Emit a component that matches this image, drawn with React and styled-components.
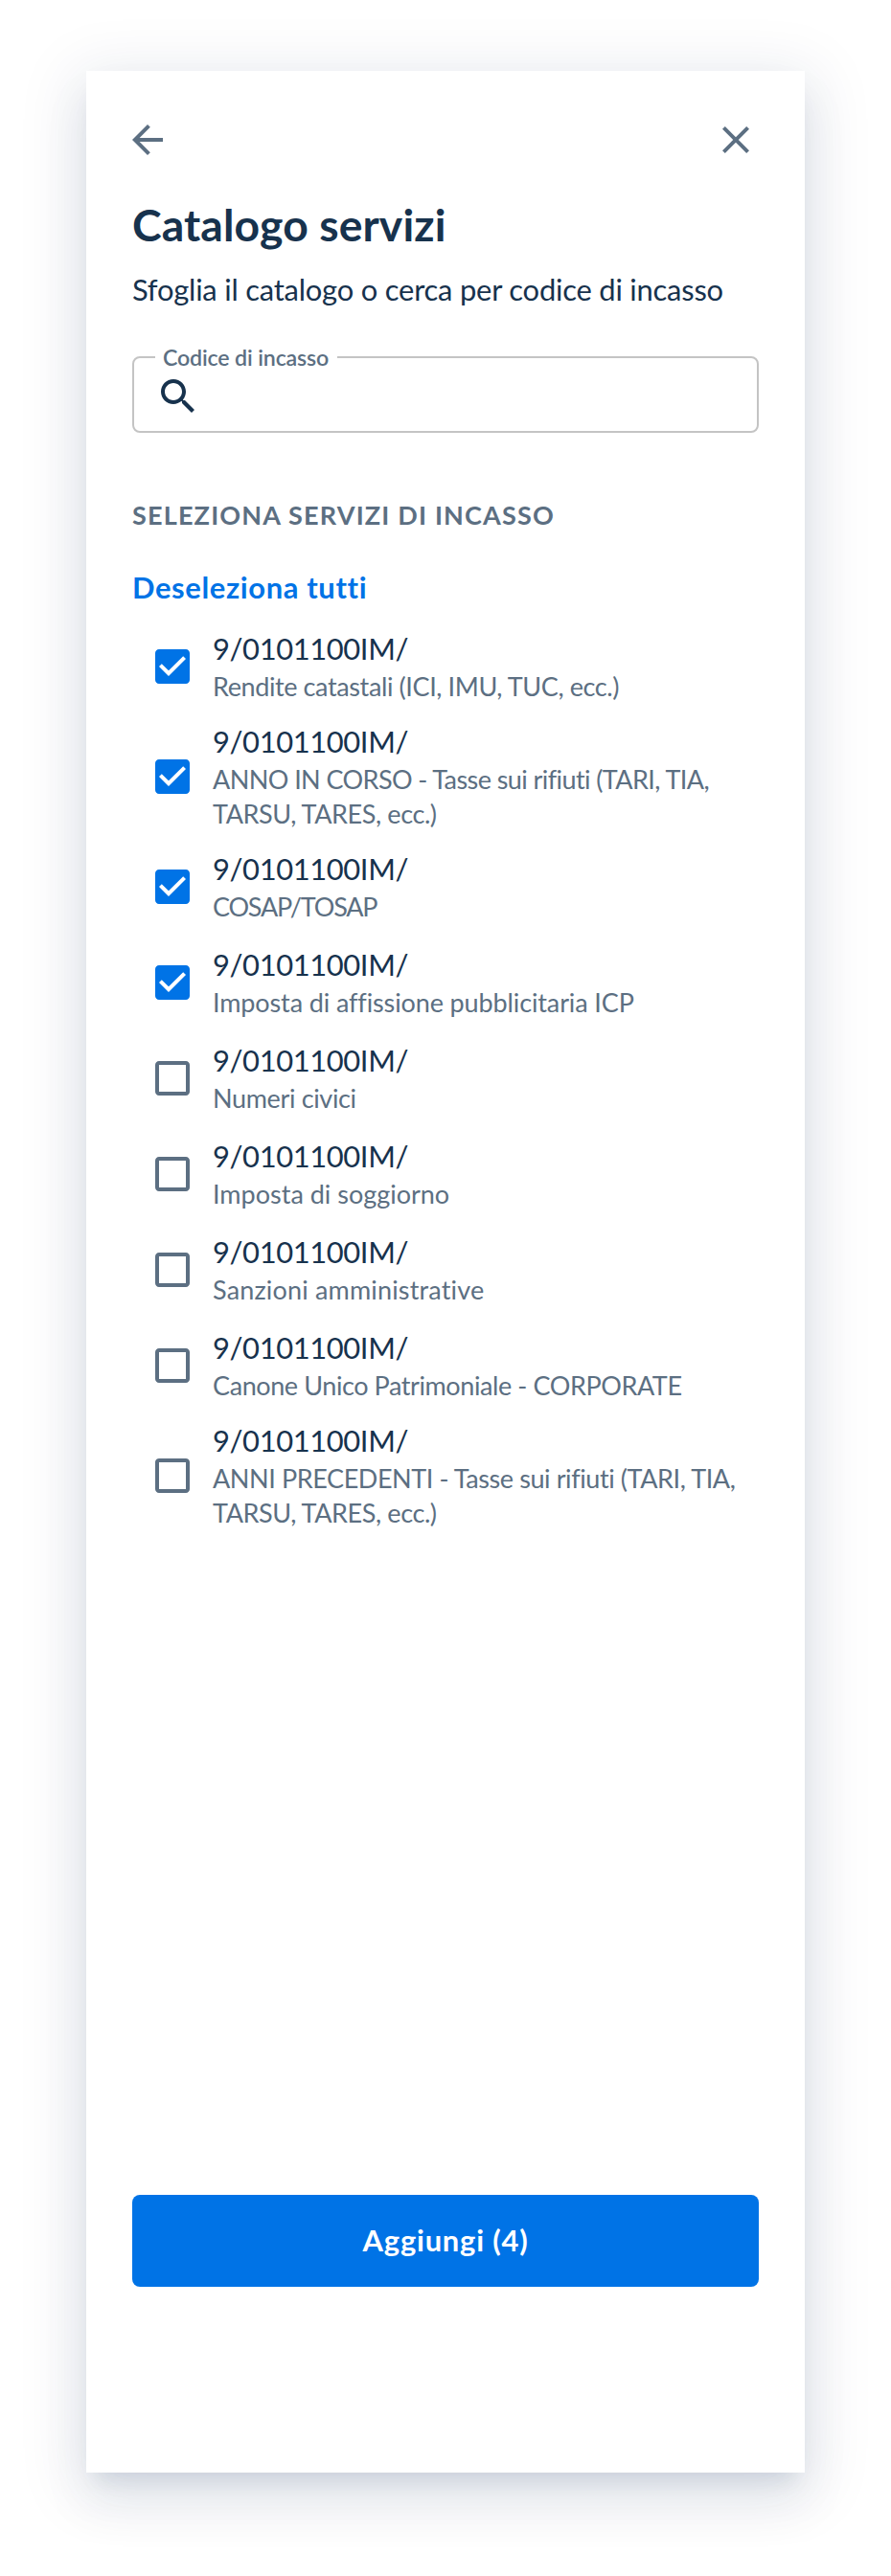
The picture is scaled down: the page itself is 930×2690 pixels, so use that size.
import React, { useState } from 'react';
import styled, { createGlobalStyle } from 'styled-components';

const color = {
  text: '#17324D',
  muted: '#5C6F82',
  primary: '#0073E6',
  outline: '#C4C4C4',
};

const GlobalStyle = createGlobalStyle`
  *, *::before, *::after { box-sizing: border-box; }
  body {
    margin: 0;
    background: #fff;
    font-family: Lato, "Open Sans", sans-serif;
    color: ${color.text};
  }
`;

const Page = styled.main`
  width: 930px;
  height: 2690px;
  padding: 74px 90px 108px;
  display: flex;
  overflow: hidden;
`;

const Drawer = styled.section`
  flex: 1;
  display: flex;
  flex-direction: column;
  padding: 48px 48px 194px;
  background: #fff;
  box-shadow:
    0 16px 20px -10px rgba(0, 43, 85, 0.1),
    0 32px 48px 4px rgba(0, 43, 85, 0.05),
    0 12px 60px 10px rgba(0, 43, 85, 0.1);
`;

const TopBar = styled.div`
  display: flex;
  justify-content: space-between;
  margin-left: -8px;
`;

const IconButton = styled.button`
  display: flex;
  padding: 0;
  border: 0;
  background: none;
  color: ${color.muted};
`;

const Svg = styled.svg`
  display: block;
  width: 48px;
  height: 48px;
  flex: none;
  fill: currentColor;
`;

const Title = styled.h1`
  margin: 36px 0 0;
  font-size: 46.3px;
  line-height: 56px;
  font-weight: 700;
  letter-spacing: 0.1px;
`;

const Subtitle = styled.p`
  margin: 17px 0 0;
  font-size: 30.9px;
  line-height: 48px;
  letter-spacing: -0.2px;
  white-space: nowrap;
`;

const Field = styled.label`
  position: relative;
  display: flex;
  height: 80px;
  margin-top: 45px;
  padding: 16px 22px;
  border: 2px solid ${color.outline};
  border-radius: 8px;
`;

const FieldLabel = styled.span`
  position: absolute;
  top: -13px;
  left: 22px;
  width: 190px;
  padding-left: 8px;
  background: #fff;
  color: ${color.muted};
  font-size: 23.2px;
  line-height: 24px;
  font-weight: 600;
  letter-spacing: -0.16px;
  white-space: nowrap;
`;

const Input = styled.input`
  flex: 1;
  min-width: 0;
  padding: 0 0 0 12px;
  border: 0;
  outline: 0;
  background: none;
  color: inherit;
  font: inherit;
  font-size: 31px;
`;

const SectionTitle = styled.h2`
  margin: 68px 0 0;
  color: ${color.muted};
  font-size: 27px;
  line-height: 36px;
  font-weight: 700;
  letter-spacing: 1.18px;
  text-transform: uppercase;
`;

const ToggleAll = styled.button`
  align-self: flex-start;
  margin: 34px 0 0;
  padding: 0;
  border: 0;
  background: none;
  color: ${color.primary};
  font-family: inherit;
  font-size: 30.9px;
  line-height: 48px;
  font-weight: 700;
  letter-spacing: 0.65px;
`;

const List = styled.ul`
  margin: 8px 0 0;
  padding: 0;
  list-style: none;
`;

const Item = styled.li`
  display: flex;
  align-items: center;
  gap: 18px;
  min-height: 100px;
  padding: 5px 0 5px 18px;
  color: ${(p) => (p.$checked ? color.primary : color.muted)};
`;

const ItemText = styled.div`
  padding-bottom: 3px;
  white-space: pre;
`;

const Code = styled.div`
  color: ${color.text};
  font-size: 30.9px;
  line-height: 48px;
  letter-spacing: -0.38px;
`;

const Description = styled.div`
  margin-top: -3px;
  color: ${color.muted};
  font-size: 27px;
  line-height: 36px;
`;

const DescriptionLine = styled.div`
  letter-spacing: ${(p) => p.$tracking}px;
`;

const Submit = styled.button`
  height: 96px;
  margin-top: auto;
  padding: 0;
  border: 0;
  border-radius: 8px;
  background: ${color.primary};
  color: #fff;
  font-family: inherit;
  font-size: 30.9px;
  line-height: 48px;
  font-weight: 700;
  letter-spacing: 0.8px;
`;

const paths = {
  back: 'M20 11H7.83l5.59-5.59L12 4l-8 8 8 8 1.41-1.41L7.83 13H20v-2z',
  close:
    'M19 6.41 17.59 5 12 10.59 6.41 5 5 6.41 10.59 12 5 17.59 6.41 19 12 13.41 17.59 19 19 17.59 13.41 12z',
  search:
    'M15.5 14h-.79l-.28-.27C15.41 12.59 16 11.11 16 9.5 16 5.91 13.09 3 9.5 3S3 5.91 3 9.5 5.91 16 9.5 16c1.61 0 3.09-.59 4.23-1.57l.27.28v.79l5 4.99L20.49 19l-4.99-5zm-6 0C7.01 14 5 11.99 5 9.5S7.01 5 9.5 5 14 7.01 14 9.5 11.99 14 9.5 14z',
  checked:
    'M19 3H5c-1.11 0-2 .9-2 2v14c0 1.1.89 2 2 2h14c1.11 0 2-.9 2-2V5c0-1.1-.89-2-2-2zm-9 14-5-5 1.41-1.41L10 14.17l7.59-7.59L19 8l-9 9z',
  unchecked:
    'M19 5v14H5V5h14m0-2H5c-1.1 0-2 .9-2 2v14c0 1.1.9 2 2 2h14c1.1 0 2-.9 2-2V5c0-1.1-.9-2-2-2z',
};

const Icon = ({ name }) => (
  <Svg viewBox="0 0 24 24" aria-hidden="true">
    <path d={paths[name]} />
  </Svg>
);

const services = [
  [['Rendite catastali (ICI, IMU, TUC, ecc.)', -0.39]],
  [
    ['ANNO IN CORSO - Tasse sui rifiuti (TARI, TIA,', -0.58],
    ['TARSU, TARES, ecc.)', -0.4],
  ],
  [['COSAP/TOSAP', -1.2]],
  [['Imposta di affissione pubblicitaria ICP', -0.12]],
  [['Numeri civici', -0.35]],
  [['Imposta di soggiorno', 0]],
  [['Sanzioni amministrative', 0.17]],
  [['Canone Unico Patrimoniale - CORPORATE', -0.41]],
  [
    ['ANNI PRECEDENTI - Tasse sui rifiuti (TARI, TIA,', -0.41],
    ['TARSU, TARES, ecc.)', -0.4],
  ],
];

export default function App() {
  const [selected, setSelected] = useState(services.map((_, i) => i < 4));
  const count = selected.filter(Boolean).length;
  const toggle = (index) =>
    setSelected(selected.map((value, i) => (i === index ? !value : value)));

  return (
    <>
      <GlobalStyle />
      <Page>
        <Drawer>
          <TopBar>
            <IconButton aria-label="Indietro"><Icon name="back" /></IconButton>
            <IconButton aria-label="Chiudi"><Icon name="close" /></IconButton>
          </TopBar>
          <Title>Catalogo servizi</Title>
          <Subtitle>Sfoglia il catalogo o cerca per codice di incasso</Subtitle>
          <Field>
            <FieldLabel>Codice di incasso</FieldLabel>
            <Icon name="search" />
            <Input />
          </Field>
          <SectionTitle>Seleziona servizi di incasso</SectionTitle>
          <ToggleAll onClick={() => setSelected(services.map(() => false))}>
            Deseleziona tutti
          </ToggleAll>
          <List>
            {services.map((lines, i) => (
              <Item key={i} $checked={selected[i]} onClick={() => toggle(i)}>
                <Icon name={selected[i] ? 'checked' : 'unchecked'} />
                <ItemText>
                  <Code>9/0101100IM/</Code>
                  <Description>
                    {lines.map(([text, tracking]) => (
                      <DescriptionLine key={text} $tracking={tracking}>
                        {text}
                      </DescriptionLine>
                    ))}
                  </Description>
                </ItemText>
              </Item>
            ))}
          </List>
          <Submit>Aggiungi ({count})</Submit>
        </Drawer>
      </Page>
    </>
  );
}
